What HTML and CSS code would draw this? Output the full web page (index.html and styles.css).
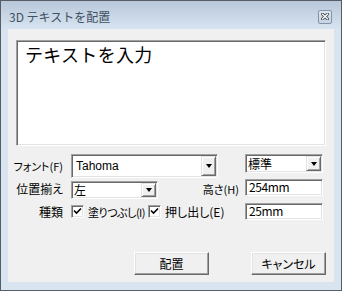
FILE: index.html
```html
<!DOCTYPE html>
<html lang="ja">
<head>
<meta charset="utf-8">
<title>3D テキストを配置</title>
<link rel="stylesheet" href="styles.css">
</head>
<body>
<div class="window">
  <div class="titlebar">
    <span class="title">3D テキストを配置</span>
    <span class="close">
      <svg width="8" height="7" viewBox="0 0 8 7">
        <path d="M1.5 1.2 L6.5 5.8 M6.5 1.2 L1.5 5.8" stroke="#3b4857" stroke-width="3" stroke-linecap="square" fill="none"/>
        <path d="M1.5 1.2 L6.5 5.8 M6.5 1.2 L1.5 5.8" stroke="#ffffff" stroke-width="1.3" stroke-linecap="square" fill="none"/>
      </svg>
    </span>
  </div>
  <div class="client">
    <div class="textarea">テキストを入力</div>

    <div class="row row1">
      <span class="lbl narrow">フォント(F)</span>
      <div class="combo font-combo"><span class="val latin">Tahoma</span><span class="drop"><i class="arrow"></i></span></div>
      <div class="combo style-combo"><span class="val">標準</span><span class="drop"><i class="arrow"></i></span></div>
    </div>

    <div class="row row2">
      <span class="lbl">位置揃え</span>
      <div class="combo align-combo"><span class="val">左</span><span class="drop"><i class="arrow"></i></span></div>
      <span class="lbl2">高さ(H)</span>
      <div class="input">254mm</div>
    </div>

    <div class="row row3">
      <span class="lbl">種類</span>
      <span class="check"><svg width="9" height="9" viewBox="0 0 9 9"><path d="M1 3.5 L3.5 6 L8 1.5" stroke="#000" stroke-width="1.6" fill="none"/></svg></span>
      <span class="ctext ctext1">塗りつぶし(I)</span>
      <span class="check"><svg width="9" height="9" viewBox="0 0 9 9"><path d="M1 3.5 L3.5 6 L8 1.5" stroke="#000" stroke-width="1.6" fill="none"/></svg></span>
      <span class="ctext ctext2">押し出し(E)</span>
      <div class="input">25mm</div>
    </div>

    <div class="buttons">
      <div class="btn">配置</div>
      <div class="btn">キャンセル</div>
    </div>
  </div>
</div>
</body>
</html>
```

FILE: styles.css
```css
html, body {
  margin: 0;
  padding: 0;
  background: #ffffff;
}

.window {
  width: 342px;
  height: 291px;
  box-sizing: border-box;
  border: 1px solid #565d66;
  background: #d9e4f1;
  display: flex;
  flex-direction: column;
  font-family: "Noto Sans CJK JP", "Noto Sans", sans-serif;
  font-size: 12px;
  color: #000;
}

.titlebar {
  height: 28px;
  flex: none;
  box-sizing: border-box;
  display: flex;
  align-items: center;
  padding: 3px 9px 0 8px;
  background: linear-gradient(#b8c8da, #d7e3f0);
}

.title {
  flex: 1;
  color: #405063;
  font-size: 12px;
  line-height: 16px;
  white-space: nowrap;
}

.close {
  width: 14px;
  height: 14px;
  box-sizing: border-box;
  border: 1px solid #8294ab;
  border-radius: 2px;
  background: linear-gradient(#dfe7f0, #c6d3e2);
  display: flex;
  align-items: center;
  justify-content: center;
}

.close svg {
  display: block;
}

.client {
  flex: 1;
  margin: 0 7px 8px 7px;
  background: #f0f0f0;
  padding: 11px 8px 0 8px;
  display: flex;
  flex-direction: column;
}

/* classic sunken edge */
.textarea,
.combo,
.input,
.check {
  box-sizing: border-box;
  background: #ffffff;
  border: 1px solid;
  border-color: #a0a0a0 #ffffff #ffffff #a0a0a0;
  box-shadow: inset 1px 1px 0 #696969, inset -1px -1px 0 #e3e3e3;
}

.textarea {
  width: 310px;
  height: 106px;
  padding: 2px 8px;
  font-size: 18px;
  line-height: 22px;
  letter-spacing: 0.3px;
  white-space: nowrap;
}

.row {
  display: flex;
  width: 307px;
}

.lbl {
  width: 47px;
  flex: none;
  display: flex;
  justify-content: flex-end;
  white-space: nowrap;
  font-feature-settings: "palt";
  margin-right: 8px;
}

.narrow {
  font-size: 11px;
}

.row1 {
  margin-top: 8px;
  align-items: flex-start;
}

.row1 .lbl {
  line-height: 24px;
}

.combo {
  display: flex;
  align-items: stretch;
  padding: 1px;
}

.combo .val {
  flex: 1;
  padding-left: 2px;
  white-space: nowrap;
}

.latin {
  font-family: "Liberation Sans", "DejaVu Sans", sans-serif;
  font-size: 12px;
}

.font-combo {
  width: 147px;
  height: 24px;
}

.font-combo .val {
  line-height: 20px;
  padding-left: 3px;
}

.style-combo {
  width: 78px;
  height: 19px;
  margin-left: 27px;
}

.style-combo .val {
  line-height: 15px;
  padding-left: 1px;
}

.align-combo .val {
  line-height: 14px;
  padding-left: 1px;
}

.drop {
  width: 15px;
  flex: none;
  box-sizing: border-box;
  background: #f0f0f0;
  border: 1px solid;
  border-color: #e3e3e3 #696969 #696969 #e3e3e3;
  box-shadow: inset 1px 1px 0 #ffffff, inset -1px -1px 0 #a0a0a0;
  display: flex;
  align-items: center;
  justify-content: center;
}

.arrow {
  display: block;
  width: 0;
  height: 0;
  border-left: 3.5px solid transparent;
  border-right: 3.5px solid transparent;
  border-top: 4px solid #000;
}

.row2 {
  margin-top: 1px;
  align-items: flex-start;
  height: 19px;
}

.row2 .lbl {
  line-height: 19px;
}

.align-combo {
  width: 87px;
  height: 18px;
  margin-top: 2px;
}

.lbl2 {
  margin-left: auto;
  margin-right: 6px;
  font-size: 11px;
  line-height: 21px;
  white-space: nowrap;
  font-feature-settings: "palt";
}

.input {
  width: 78px;
  height: 17px;
  flex: none;
  padding: 0 3px;
  font-size: 12px;
  line-height: 13px;
  letter-spacing: -0.4px;
  white-space: nowrap;
}

.row3 {
  margin-top: 5px;
  align-items: center;
  height: 17px;
}

.row3 .input {
  margin-left: auto;
}

.check {
  width: 13px;
  height: 13px;
  flex: none;
  display: flex;
  align-items: center;
  justify-content: center;
}

.check svg {
  display: block;
}

.ctext {
  white-space: nowrap;
  font-feature-settings: "palt";
}

.ctext1 {
  width: 60px;
  margin-left: 4px;
  flex: none;
  font-size: 11px;
  letter-spacing: -0.5px;
}

.ctext2 {
  margin-left: 4px;
}

.buttons {
  display: flex;
  justify-content: flex-end;
  gap: 42px;
  margin-top: 32px;
}

.btn {
  width: 75px;
  height: 23px;
  box-sizing: border-box;
  background: #f0f0f0;
  border: 1px solid;
  border-color: #ffffff #696969 #696969 #ffffff;
  box-shadow: inset -1px -1px 0 #a0a0a0, inset 1px 1px 0 #e3e3e3;
  display: flex;
  align-items: center;
  justify-content: center;
  line-height: 16px;
  font-feature-settings: "palt";
}
```
